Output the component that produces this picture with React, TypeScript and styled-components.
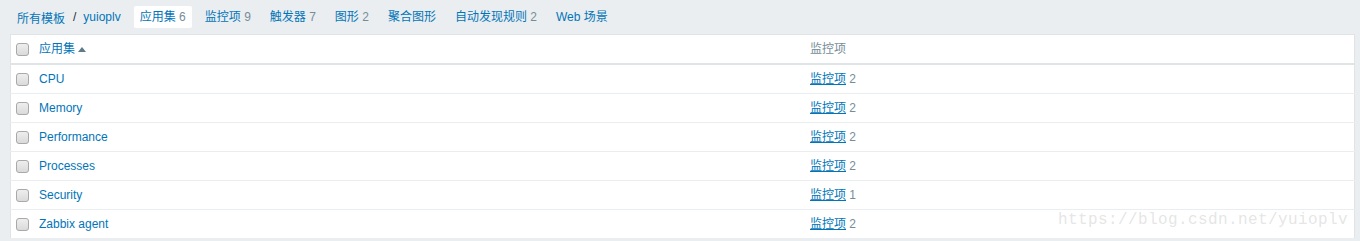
import React from "react";
import styled, { createGlobalStyle } from "styled-components";

type Row = {
  name: string;
  items: number;
};

const rows: Row[] = [
  { name: "CPU", items: 2 },
  { name: "Memory", items: 2 },
  { name: "Performance", items: 2 },
  { name: "Processes", items: 2 },
  { name: "Security", items: 1 },
  { name: "Zabbix agent", items: 2 },
];

type Tab = {
  label: string;
  count?: number;
  active?: boolean;
};

const tabs: Tab[] = [
  { label: "应用集", count: 6, active: true },
  { label: "监控项", count: 9 },
  { label: "触发器", count: 7 },
  { label: "图形", count: 2 },
  { label: "聚合图形" },
  { label: "自动发现规则", count: 2 },
  { label: "Web 场景" },
];

const App: React.FC = () => {
  return (
    <Page>
      <GlobalStyle />
      <Nav>
        <Breadcrumb>
          <NavLink>所有模板</NavLink>
          <Sep>/</Sep>
          <NavLink>yuioplv</NavLink>
        </Breadcrumb>
        {tabs.map((tab) => (
          <TabItem key={tab.label} active={tab.active}>
            <NavLink>{tab.label}</NavLink>
            {tab.count !== undefined && <Count> {tab.count}</Count>}
          </TabItem>
        ))}
      </Nav>
      <Table>
        <thead>
          <tr>
            <HeadCell width={13}>
              <Check type="checkbox" />
            </HeadCell>
            <HeadCell width={761}>
              <SortLink>
                应用集
                <SortArrow />
              </SortLink>
            </HeadCell>
            <HeadCell>
              <PlainHead>监控项</PlainHead>
            </HeadCell>
          </tr>
        </thead>
        <tbody>
          {rows.map((row) => (
            <tr key={row.name}>
              <Cell>
                <Check type="checkbox" />
              </Cell>
              <Cell>
                <NameLink>{row.name}</NameLink>
              </Cell>
              <Cell>
                <ItemsLink>监控项</ItemsLink>
                <Count> {row.items}</Count>
              </Cell>
            </tr>
          ))}
        </tbody>
      </Table>
      <Watermark>https://blog.csdn.net/yuioplv</Watermark>
    </Page>
  );
};

export default App;

// Styled Components
const GlobalStyle = createGlobalStyle`
  html, body {
    margin: 0;
    padding: 0;
    background: #ebeef0;
  }
  body {
    font-family: Arial, "Liberation Sans", "Noto Sans CJK SC", sans-serif;
    font-size: 12px;
  }
`;

const Page = styled.div`
  position: relative;
  height: 241px;
  padding: 6px 5px 0 10px;
  box-sizing: border-box;
  background: #ebeef0;
  overflow: hidden;
`;

const Nav = styled.div`
  display: flex;
  align-items: center;
  height: 22px;
  margin-bottom: 6px;
`;

const Breadcrumb = styled.div`
  display: flex;
  align-items: center;
  padding-left: 7px;
  margin-right: 13px;
`;

const Sep = styled.span`
  color: #1f2c33;
  margin: 0 7px 0 8px;
`;

const TabItem = styled.div<{ active?: boolean }>`
  height: 22px;
  line-height: 22px;
  padding: 0 6px;
  margin-right: 7px;
  border-radius: 2px;
  white-space: pre;
  background: ${(p) => (p.active ? "#ffffff" : "transparent")};
`;

const NavLink = styled.span`
  color: #0275b8;
`;

const Count = styled.span`
  color: #768d99;
  white-space: pre;
`;

const Table = styled.table`
  width: 1345px;
  border-collapse: collapse;
  table-layout: fixed;
  background: #ffffff;
  border: 1px solid #dfe4e7;
`;

const HeadCell = styled.th<{ width?: number }>`
  ${(p) => (p.width ? `width: ${p.width}px;` : "")}
  padding: 6px 5px;
  line-height: 16px;
  height: 16px;
  text-align: left;
  font-weight: normal;
  vertical-align: middle;
  border-bottom: 2px solid #dfe4e7;
`;

const Cell = styled.td`
  padding: 6px 5px;
  line-height: 16px;
  height: 16px;
  vertical-align: middle;
  border-bottom: 1px solid #ebeef0;
  white-space: pre;
`;

const Check = styled.input`
  appearance: none;
  display: block;
  width: 13px;
  height: 13px;
  margin: 0;
  border: 1px solid #a9a9a9;
  border-radius: 3px;
  box-sizing: border-box;
  background: linear-gradient(#eeeeee, #dadada);
`;

const SortLink = styled.span`
  color: #0275b8;
  display: inline-flex;
  align-items: center;
`;

const SortArrow = styled.span`
  display: inline-block;
  width: 0;
  height: 0;
  margin-left: 3px;
  border-left: 4px solid transparent;
  border-right: 4px solid transparent;
  border-bottom: 5px solid #5f7a88;
`;

const PlainHead = styled.span`
  color: #768d99;
`;

const NameLink = styled.span`
  color: #0275b8;
`;

const ItemsLink = styled.span`
  color: #0275b8;
  text-decoration: underline;
`;

const Watermark = styled.div`
  position: absolute;
  right: 12px;
  top: 211px;
  font-family: "Liberation Mono", monospace;
  font-size: 16px;
  letter-spacing: 0.4px;
  line-height: 18px;
  color: rgba(190, 190, 190, 0.4);
  pointer-events: none;
`;
